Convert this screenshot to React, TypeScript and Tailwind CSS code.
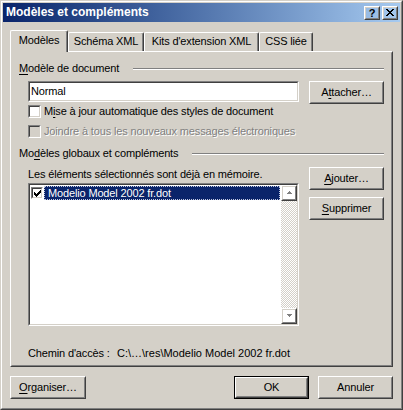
import React from 'react';

function Raised({ children, className = '', isDefault = false }: { children: React.ReactNode; className?: string; isDefault?: boolean }) {
  const body = (
    <div className="flex h-full w-full border border-t-white border-l-white border-r-[#404040] border-b-[#404040]">
      <div className="flex flex-1 items-center justify-center border border-[#d4d0c8] border-r-[#808080] border-b-[#808080]">
        {children}
      </div>
    </div>
  );
  if (isDefault) return <div className={`border border-black ${className}`}>{body}</div>;
  return <div className={className}>{body}</div>;
}

function Sunken({ children, className = '', inner = 'bg-white' }: { children?: React.ReactNode; className?: string; inner?: string }) {
  return (
    <div className={`border border-t-[#808080] border-l-[#808080] border-r-white border-b-white ${className}`}>
      <div className={`h-full w-full border border-t-[#404040] border-l-[#404040] border-r-[#d4d0c8] border-b-[#d4d0c8] ${inner}`}>
        {children}
      </div>
    </div>
  );
}

function CheckMark() {
  // 7x7 pixel tick
  const px = [
    [6, 0], [5, 1], [6, 1], [0, 2], [4, 2], [5, 2], [6, 2], [0, 3], [1, 3], [3, 3], [4, 3], [5, 3],
    [0, 4], [1, 4], [2, 4], [3, 4], [4, 4], [1, 5], [2, 5], [3, 5], [2, 6],
  ];
  return (
    <svg width="7" height="7" viewBox="0 0 7 7" shapeRendering="crispEdges">
      {px.map(([x, y]) => (
        <rect key={`${x}-${y}`} x={x} y={y} width="1" height="1" fill="#000" />
      ))}
    </svg>
  );
}

function Arrow({ up }: { up: boolean }) {
  const pts = up ? '4,1 7,4 1,4' : '1,1 7,1 4,4';
  return (
    <svg width="9" height="6" viewBox="0 0 9 6" shapeRendering="crispEdges">
      <polygon points={up ? '5,2 8,5 2,5' : '2,2 8,2 5,5'} fill="#fff" />
      <polygon points={pts} fill="#808080" />
    </svg>
  );
}

function GroupHeader({ children }: { children: React.ReactNode }) {
  return (
    <div className="flex h-[13px] items-center">
      <span className="whitespace-nowrap">{children}</span>
      <div className="ml-[14px] h-[2px] flex-1 border-t border-b border-t-[#808080] border-b-white" />
    </div>
  );
}

export default function App() {
  return (
    <div className="h-[410px] w-[403px] border border-t-[#d4d0c8] border-l-[#d4d0c8] border-r-[#404040] border-b-[#404040] bg-[#d4d0c8] font-['Liberation_Sans',Arial,sans-serif] text-[11px] leading-[13px] text-black select-none">
      <div className="flex h-full flex-col border border-t-white border-l-white border-r-[#808080] border-b-[#808080] p-px">
        {/* Title bar */}
        <div className="flex h-[19px] items-center bg-gradient-to-r from-[#0a246a] to-[#a6caf0] pl-[3px] pr-[2px]">
          <span className="flex-1 text-[12px] font-bold text-white">Modèles et compléments</span>
          <Raised className="h-[14px] w-[16px]">
            <span className="text-[11px] leading-[10px] font-bold">?</span>
          </Raised>
          <Raised className="ml-[2px] h-[14px] w-[16px]">
            <svg width="8" height="7" viewBox="0 0 8 7" shapeRendering="crispEdges">
              <path d="M0 0h2v1h-2zM6 0h2v1h-2zM1 1h2v1h-2zM5 1h2v1h-2zM2 2h4v1h-4zM3 3h2v1h-2zM2 4h4v1h-4zM1 5h2v1h-2zM5 5h2v1h-2zM0 6h2v1h-2zM6 6h2v1h-2z" fill="#000" />
            </svg>
          </Raised>
        </div>

        <div className="px-[7px] pt-[8px] tracking-[-0.15px]">
          {/* Tabs */}
          <div className="flex items-end">
            <div className="relative z-10 -mb-px flex h-[22px] w-[58px] justify-center rounded-t-[2px] border-t border-l border-r border-t-white border-l-white border-r-[#404040] bg-[#d4d0c8] pt-[3px] shadow-[inset_-1px_0_#808080]">
              Modèles
            </div>
            <div className="flex h-[19px] w-[76px] justify-center rounded-t-[2px] border-t border-l border-r border-t-white border-l-white border-r-[#404040] pt-[2px] shadow-[inset_-1px_0_#808080]">
              Schéma XML
            </div>
            <div className="flex h-[19px] w-[115px] justify-center rounded-t-[2px] border-t border-l border-r border-t-white border-l-white border-r-[#404040] pt-[2px] shadow-[inset_-1px_0_#808080]">
              Kits d'extension XML
            </div>
            <div className="flex h-[19px] w-[54px] justify-center rounded-t-[2px] border-t border-l border-r border-t-white border-l-white border-r-[#404040] pt-[2px] shadow-[inset_-1px_0_#808080]">
              CSS liée
            </div>
          </div>

          {/* Tab panel */}
          <div className="h-[316px] border border-t-white border-l-white border-r-[#404040] border-b-[#404040]">
            <div className="h-full border border-t-[#d4d0c8] border-l-[#d4d0c8] border-r-[#808080] border-b-[#808080] px-[7px] pt-[9px]">
              <GroupHeader>
                <span className="underline underline-offset-[2px]">M</span>odèle de document
              </GroupHeader>

              <div className="ml-[9px] mt-[6px] flex items-start">
                <Sunken className="h-[21px] w-[271px]">
                  <div className="pl-[1px] pt-[2px]">Normal</div>
                </Sunken>
                <Raised className="ml-[10px] h-[23px] w-[75px]">
                  <span>
                    A<span className="underline underline-offset-[2px]">t</span>tacher…
                  </span>
                </Raised>
              </div>

              <div className="ml-[9px] mt-px flex h-[13px] items-center">
                <Sunken className="h-[13px] w-[13px]" />
                <span className="ml-[3px]">
                  M<span className="underline underline-offset-[2px]">i</span>se à jour automatique des styles de document
                </span>
              </div>

              <div className="ml-[9px] mt-[7px] flex h-[13px] items-center">
                <Sunken className="h-[13px] w-[13px]" inner="bg-[#d4d0c8]" />
                <span className="ml-[3px] text-[#808080] [text-shadow:1px_1px_0_#fff]">
                  Joindre à tous les nouveaux messages électroniques
                </span>
              </div>

              <div className="mt-[9px]">
                <GroupHeader>
                  Mo<span className="underline underline-offset-[2px]">d</span>èles globaux et compléments
                </GroupHeader>
              </div>

              <div className="ml-[9px] mt-[7px] flex items-start">
                <div className="flex flex-col">
                  <div className="mt-px">Les éléments sélectionnés sont déjà en mémoire.</div>
                  <Sunken className="mt-[2px] h-[143px] w-[271px]">
                    <div className="flex h-full">
                      <div className="flex-1 pl-[1px] pt-px">
                        <div className="flex items-center">
                          <Sunken className="h-[12px] w-[12px]">
                            <div className="flex h-full items-center justify-center">
                              <CheckMark />
                            </div>
                          </Sunken>
                          <div className="ml-px flex h-[14px] w-[236px] items-center border border-dotted border-[#c0c8e0] bg-[#0a246a] pl-[3px] text-white">
                            Modelio Model 2002 fr.dot
                          </div>
                        </div>
                      </div>
                      <div className="flex w-[16px] flex-col">
                        <Raised className="h-[16px] w-[16px]">
                          <Arrow up />
                        </Raised>
                        <div className="flex-1 bg-[repeating-conic-gradient(#d4d0c8_0%_25%,#ffffff_0%_50%)] bg-[length:2px_2px]" />
                        <Raised className="h-[16px] w-[16px]">
                          <Arrow up={false} />
                        </Raised>
                      </div>
                    </div>
                  </Sunken>
                </div>
                <div className="ml-[10px] flex flex-col">
                  <Raised className="h-[23px] w-[75px]">
                    <span>
                      <span className="underline underline-offset-[2px]">A</span>jouter…
                    </span>
                  </Raised>
                  <Raised className="mt-[7px] h-[23px] w-[75px]">
                    <span>
                      <span className="underline underline-offset-[2px]">S</span>upprimer
                    </span>
                  </Raised>
                </div>
              </div>

              <div className="ml-[9px] mt-[21px] flex">
                <span className="w-[89px]">Chemin d'accès :</span>
                <span className="tracking-normal">C:\…\res\Modelio Model 2002 fr.dot</span>
              </div>
            </div>
          </div>

          {/* Bottom buttons */}
          <div className="mt-[9px] flex gap-[9px]">
            <Raised className="h-[23px] w-[76px]">
              <span>
                <span className="underline underline-offset-[2px]">O</span>rganiser…
              </span>
            </Raised>
            <Raised isDefault className="ml-auto h-[23px] w-[75px]">
              OK
            </Raised>
            <Raised className="h-[23px] w-[75px]">Annuler</Raised>
          </div>
        </div>
      </div>
    </div>
  );
}
